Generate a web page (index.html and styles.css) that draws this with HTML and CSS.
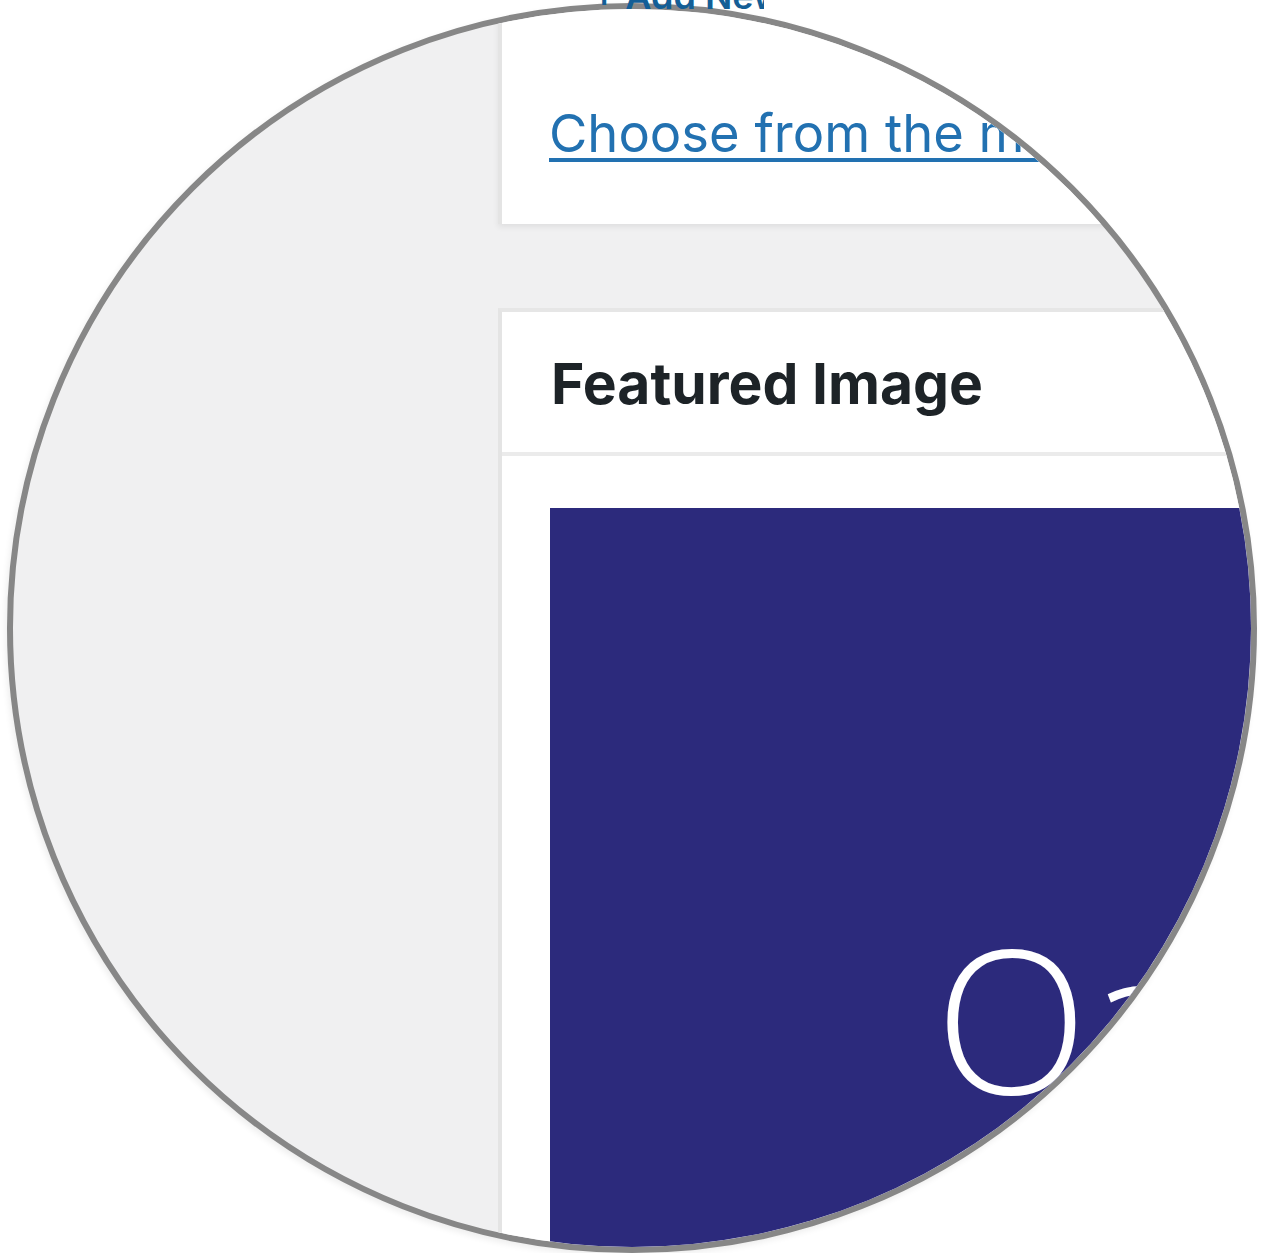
FILE: index.html
```html
<!DOCTYPE html>
<html lang="en">
  <head>
    <meta charset="UTF-8" />
    <meta name="viewport" content="width=device-width, initial-scale=1.0" />
    <title>Featured Image – zoom</title>
    <link rel="stylesheet" href="styles.css">
  </head>
  <body>
    <div class="add-new">
      <a href="#">+ Add New Category</a>
    </div>

    <div class="lens">
      <div class="side"></div>

      <div class="column">
        <div class="postbox categories">
          <a href="#" class="most-used">Choose from the most used categories</a>
        </div>

        <div class="postbox featured">
          <div class="postbox-header">
            <h2>Featured Image</h2>
          </div>
          <div class="inside">
            <div class="thumb">
              <span class="thumb-text">Oa</span>
            </div>
          </div>
        </div>
      </div>
    </div>
  </body>
</html>
```

FILE: styles.css
```css
body {
  margin: 0;
  background-color: #fff;
  font-family: Inter, "Noto Sans", sans-serif;
}

/* magnifier circle */
.lens {
  box-sizing: border-box;
  width: 1250px;
  height: 1250px;
  margin: 3px 0 0 7px;
  border: 6px solid #878787;
  border-radius: 50%;
  overflow: hidden;
  background-color: #f0f0f1;
  box-shadow: -2px 3px 6px rgba(0, 0, 0, 0.07);
  display: flex;
}

.side {
  width: 485px;
  flex-shrink: 0;
}

.column {
  width: 900px;
  flex-shrink: 0;
}

.postbox {
  background-color: #fff;
  border-left: 4px solid #e4e4e4;
}

.categories {
  height: 215px;
  box-sizing: border-box;
  padding: 94px 0 0 47px;
  box-shadow: 0 3px 6px rgba(0, 0, 0, 0.07);
}

.most-used {
  display: block;
  font-size: 52.5px;
  line-height: 60px;
  color: #2271b1;
  white-space: nowrap;
  text-decoration: underline;
  text-decoration-thickness: 4px;
  text-underline-offset: 6px;
}

.featured {
  margin-top: 84px;
  border-top: 4px solid #e6e6e6;
}

.postbox-header {
  height: 144px;
  box-sizing: border-box;
  padding: 37px 0 0 49px;
  border-bottom: 4px solid #ebebeb;
}

.postbox-header h2 {
  margin: 0;
  font-size: 57px;
  line-height: 70px;
  font-weight: 700;
  color: #1d2327;
}

.inside {
  padding: 52px 0 0 48px;
}

.thumb {
  height: 900px;
  background-color: #2c2a7c;
  box-sizing: border-box;
  padding: 409px 0 0 385px;
}

.thumb-text {
  display: block;
  font-family: "Open Sans", sans-serif;
  font-weight: 300;
  font-size: 200px;
  line-height: 200px;
  color: #fff;
}

/* bit of the link above, drawn over the lens rim */
.add-new {
  position: absolute;
  top: 0;
  left: 592px;
  width: 172px;
  height: 13px;
  overflow: hidden;
}

.add-new a {
  display: block;
  margin-top: -24px;
  font-size: 36px;
  line-height: 40px;
  font-weight: 600;
  color: #135e96;
  text-decoration: none;
  white-space: nowrap;
}
```
